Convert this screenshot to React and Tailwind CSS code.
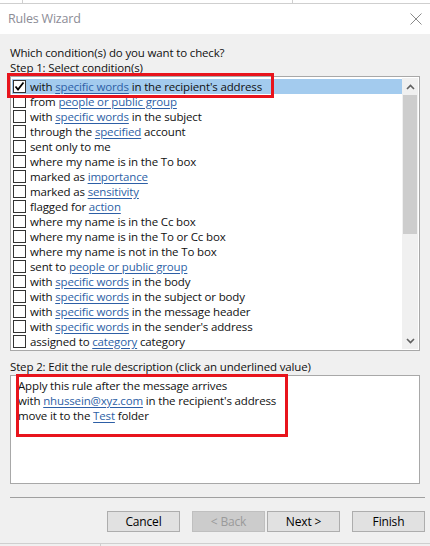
import { useState } from 'react'

const conditions = [
	['with ', 'specific words', ' in the recipient\'s address'],
	['from ', 'people or public group', ''],
	['with ', 'specific words', ' in the subject'],
	['through the ', 'specified', ' account'],
	['sent only to me', '', ''],
	['where my name is in the To box', '', ''],
	['marked as ', 'importance', ''],
	['marked as ', 'sensitivity', ''],
	['flagged for ', 'action', ''],
	['where my name is in the Cc box', '', ''],
	['where my name is in the To or Cc box', '', ''],
	['where my name is not in the To box', '', ''],
	['sent to ', 'people or public group', ''],
	['with ', 'specific words', ' in the body'],
	['with ', 'specific words', ' in the subject or body'],
	['with ', 'specific words', ' in the message header'],
	['with ', 'specific words', ' in the sender\'s address'],
	['assigned to ', 'category', ' category'],
]

const Link = ({ children }) => (
	<span className="text-[#2d5fa6] underline underline-offset-[2px] decoration-[#2d5fa6]">{children}</span>
)

const Checkbox = ({ checked }) => (
	<span className="w-[13px] h-[13px] border border-[#333333] bg-white flex items-center justify-center shrink-0">
		{checked && (
			<svg width="11" height="11" viewBox="0 0 11 11">
				<path d="M1.5 5.5 L4 8.5 L9.5 1.5" stroke="#000" strokeWidth="1.8" fill="none" />
			</svg>
		)}
	</span>
)

const Button = ({ children, disabled }) => (
	<button
		className={
			disabled
				? 'w-[73px] h-[21px] bg-[#cccccc] border border-[#bfbfbf] text-[#9a9a9a] text-[12px] leading-[18px]'
				: 'w-[73px] h-[21px] bg-[#e1e1e1] border border-[#adadad] text-black text-[12px] leading-[18px]'
		}
	>
		{children}
	</button>
)

export default function App() {
	const [checked] = useState(0)

	return (
		<div className="w-[430px] h-[546px] bg-[#f0f0f0] flex flex-col relative overflow-hidden text-[11.5px] tracking-[-0.15px] text-[#111]" style={{ fontFamily: '"Open Sans", "Noto Sans", sans-serif' }}>
			{/* window strip above the dialog */}
			<div className="h-[4px] bg-white border-b border-[#cfcfcf] flex shrink-0">
				<div className="w-[23px] border-r border-[#cfcfcf]" />
				<div className="w-[270px] border-r border-[#cfcfcf]" />
			</div>

			{/* title bar */}
			<div className="h-[30px] bg-white flex items-center justify-between pl-[8px] pr-[8px] shrink-0">
				<span className="text-[12.5px] tracking-[-0.2px] text-[#8c8c96]">Rules Wizard</span>
				<svg width="12" height="12" viewBox="0 0 12 12">
					<path d="M0.5 0.5 L11.5 11.5 M11.5 0.5 L0.5 11.5" stroke="#8a8a8a" strokeWidth="1" />
				</svg>
			</div>

			<div className="flex flex-col px-[10px] pt-[11px]">
				<div className="h-[15px] leading-[15px]">Which condition(s) do you want to check?</div>
				<div className="h-[16px] leading-[16px]">Step 1: Select condition(s)</div>

				{/* condition list */}
				<div className="h-[275px] border border-[#a8a8a8] bg-white flex p-[1px]">
					<div className="flex-1 flex flex-col pt-[1px]">
						{conditions.map(([pre, link, post], i) => (
							<div
								key={i}
								className={`h-[15px] flex items-center gap-[4px] pl-[1px] whitespace-nowrap ${i === checked ? 'bg-[#a3cbee]' : ''}`}
							>
								<Checkbox checked={i === checked} />
								<span className="leading-[14px]">
									{pre}
									{link && <Link>{link}</Link>}
									{post}
								</span>
							</div>
						))}
					</div>
					<div className="w-[16px] flex flex-col bg-[#f0f0f0]">
						<div className="h-[17px] flex items-center justify-center">
							<svg width="9" height="6" viewBox="0 0 9 6">
								<path d="M1 5 L4.5 1.5 L8 5" stroke="#606060" strokeWidth="1.6" fill="none" />
							</svg>
						</div>
						<div className="h-[139px] bg-[#cdcdcd] mx-[1px]" />
						<div className="flex-1" />
						<div className="h-[17px] flex items-center justify-center">
							<svg width="9" height="6" viewBox="0 0 9 6">
								<path d="M1 1 L4.5 4.5 L8 1" stroke="#606060" strokeWidth="1.6" fill="none" />
							</svg>
						</div>
					</div>
				</div>

				<div className="mt-[8px] h-[16px] leading-[16px]">Step 2: Edit the rule description (click an underlined value)</div>

				{/* rule description */}
				<div className="h-[109px] border border-[#a8a8a8] bg-white pl-[7px] pt-[2px] flex flex-col">
					<div className="h-[15px] leading-[15px]">Apply this rule after the message arrives</div>
					<div className="h-[15px] leading-[15px]">
						with <Link>nhussein@xyz.com</Link> in the recipient's address
					</div>
					<div className="h-[15px] leading-[15px]">
						move it to the <Link>Test</Link> folder
					</div>
				</div>

				<div className="mt-[13px] h-0 border-t border-[#a0a0a0] mr-[-5px]" />

				<div className="mt-[13px] flex justify-end gap-[12px] mr-[-5px]">
					<Button>Cancel</Button>
					<div className="flex gap-[2px]">
						<Button disabled>&lt; Back</Button>
						<Button>Next &gt;</Button>
					</div>
					<Button>Finish</Button>
				</div>
			</div>

			{/* bottom window edge */}
			<div className="absolute left-0 right-0 top-[543px] h-[3px] border-t border-[#cfcfcf] flex">
				<div className="w-[101px] border-r border-[#cfcfcf]" />
			</div>

			{/* red annotation boxes */}
			<div className="absolute left-[7px] top-[73px] w-[267px] h-[25px] border-[3px] border-[#e8141c]" />
			<div className="absolute left-[16px] top-[374px] w-[272px] h-[63px] border-[3px] border-[#e8141c]" />
		</div>
	)
}
